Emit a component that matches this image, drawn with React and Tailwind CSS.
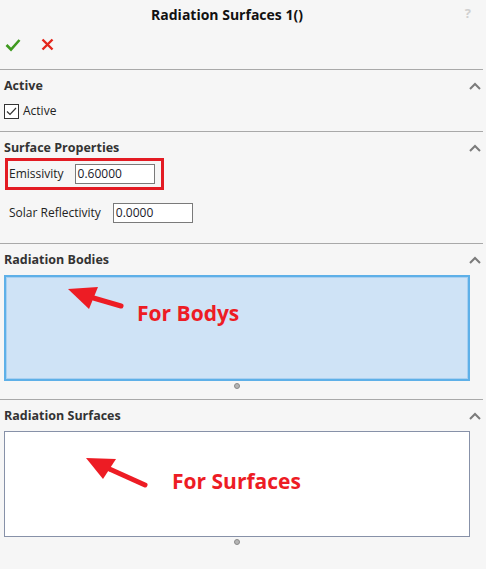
import React from "react";

const Chevron = () => (
  <svg width="12" height="8" viewBox="0 0 12 8" className="block">
    <polyline points="1,7 6,2 11,7" fill="none" stroke="#7b7b7b" strokeWidth="2" />
  </svg>
);

const Handle = () => (
  <div className="flex justify-center w-[466px] h-[10px] items-center">
    <div className="w-[6px] h-[6px] rounded-full bg-[#b5b5b5] border border-[#8a8a8a]" />
  </div>
);

const Sep = () => <div className="h-px w-[483px] bg-[#a9a9a9]" />;

const Header = ({ children }) => (
  <div className="flex items-center justify-between h-[20px] pr-[5px]">
    <span className="text-[12.5px] font-bold text-[#333]">{children}</span>
    <Chevron />
  </div>
);

const Arrow = ({ tip, b1, b2, tail }) => (
  <svg className="absolute left-0 top-0" width="466" height="106">
    <line x1={(b1[0] + b2[0]) / 2} y1={(b1[1] + b2[1]) / 2} x2={tail[0]} y2={tail[1]} stroke="#ed1c24" strokeWidth="5" strokeLinecap="round" />
    <polygon points={`${tip[0]},${tip[1]} ${b1[0]},${b1[1]} ${b2[0]},${b2[1]}`} fill="#ed1c24" />
  </svg>
);

export default function App() {
  return (
    <div
      className="w-[486px] h-[569px] bg-[#f6f6f6] text-[#222] overflow-hidden"
      style={{ fontFamily: '"Open Sans", "Noto Sans", sans-serif' }}
    >
      {/* title */}
      <div className="relative h-[28px] flex items-center justify-center">
        <span className="text-[14px] font-bold text-[#111] ml-[-32px]">Radiation Surfaces 1()</span>
        <span className="absolute right-[15px] top-[4px] text-[13px] font-bold text-[#d0d0d0]">?</span>
      </div>
      {/* ok / cancel */}
      <div className="h-[41px] flex items-start pt-[10px] pl-[5px] gap-[20px]">
        <svg width="16" height="14" viewBox="0 0 16 14">
          <polyline points="1.5,7 6,11.5 14.5,2" fill="none" stroke="#3f9a1f" strokeWidth="2.6" />
        </svg>
        <svg width="13" height="13" viewBox="0 0 13 13">
          <path d="M1.5 1.5 L11.5 11.5 M11.5 1.5 L1.5 11.5" stroke="#e3261b" strokeWidth="2.4" />
        </svg>
      </div>
      <Sep />
      {/* Active */}
      <div className="h-[61px] pl-[4px] pt-[6px]">
        <Header>Active</Header>
        <div className="flex items-center gap-[4px] mt-[6px]">
          <div className="w-[15px] h-[15px] border border-[#333] bg-white flex items-center justify-center">
            <svg width="11" height="9" viewBox="0 0 11 9">
              <polyline points="1,4.5 4,7.5 10,1" fill="none" stroke="#333" strokeWidth="1.2" />
            </svg>
          </div>
          <span className="text-[12px] text-[#222]">Active</span>
        </div>
      </div>
      <Sep />
      {/* Surface Properties */}
      <div className="h-[111px] pl-[4px] pt-[6px]">
        <Header>Surface Properties</Header>
        <div className="ml-[1px] w-[159px] h-[32px] border-[3px] border-[#e31b23] flex items-center pl-[1px] gap-[11px]">
          <span className="text-[12px] text-[#222]">Emissivity</span>
          <div className="w-[80px] h-[20px] border border-[#7a7a7a] bg-white text-[12px] leading-[18px] pl-[2px] text-[#1a1a2a]">0.60000</div>
        </div>
        <div className="mt-[13px] ml-[5px] flex items-center gap-[12px]">
          <span className="text-[12px] text-[#222]">Solar Reflectivity</span>
          <div className="w-[80px] h-[20px] border border-[#7a7a7a] bg-white text-[12px] leading-[18px] pl-[2px] text-[#1a1a2a]">0.0000</div>
        </div>
      </div>
      <Sep />
      {/* Radiation Bodies */}
      <div className="h-[155px] pl-[4px] pt-[6px]">
        <Header>Radiation Bodies</Header>
        <div className="relative mt-[5px] w-[466px] h-[106px] border-2 border-[#5eb0e8] bg-[#cfe3f6] shadow-[inset_0_0_0_1px_#a9d0f1]">
          <Arrow tip={[62, 12]} b1={[92, 10]} b2={[83, 32]} tail={[115, 29]} />
          <span className="absolute left-[131px] top-[26px] text-[21px] font-bold text-[#ed1c24] leading-none">For Bodys</span>
        </div>
        <Handle />
      </div>
      <Sep />
      {/* Radiation Surfaces */}
      <div className="pl-[4px] pt-[6px]">
        <Header>Radiation Surfaces</Header>
        <div className="relative mt-[5px] w-[466px] h-[106px] border border-[#8791a8] bg-white">
          <Arrow tip={[81, 26]} b1={[111, 27]} b2={[98, 47]} tail={[140, 53]} />
          <span className="absolute left-[167px] top-[39px] text-[21px] font-bold text-[#ed1c24] leading-none">For Surfaces</span>
        </div>
        <Handle />
      </div>
    </div>
  );
}
